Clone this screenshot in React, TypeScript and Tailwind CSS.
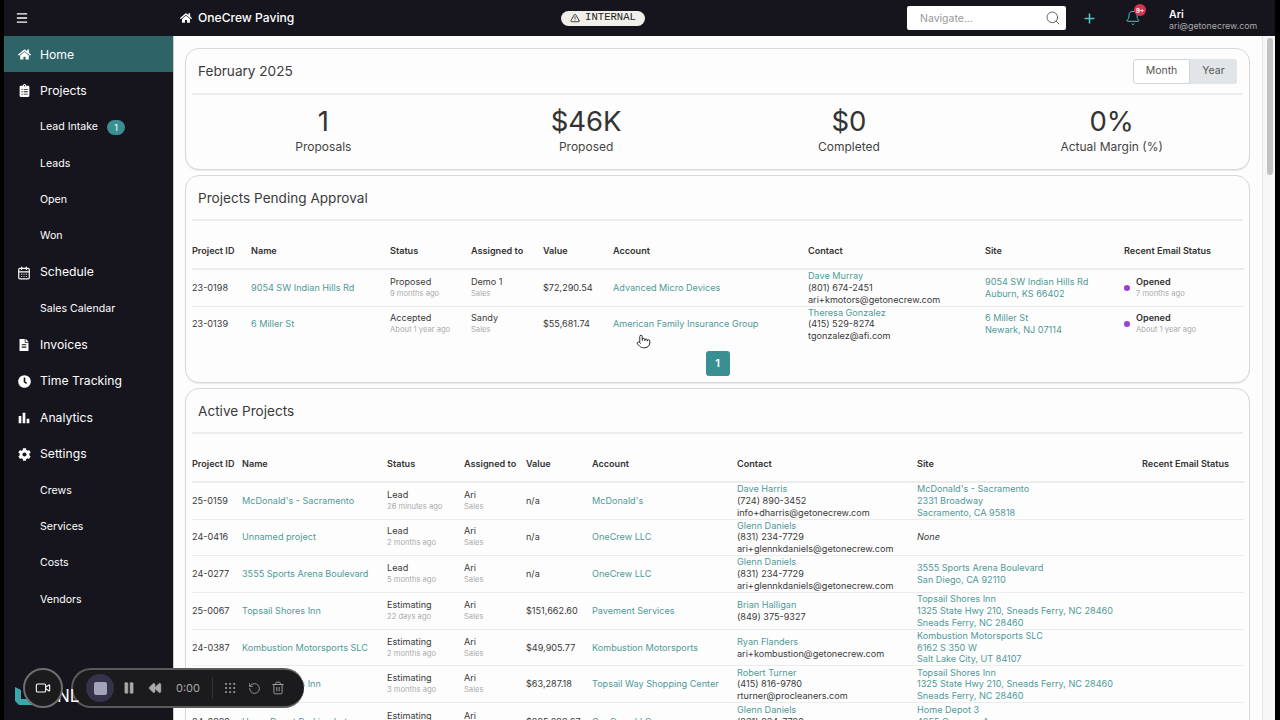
import React from "react";
import { Menu, Search, Plus, Bell, TriangleAlert, CalendarDays, Video, Pause, Rewind, Grip, RotateCcw, Trash2, Pointer } from "lucide-react";
import { FaHome, FaClipboardList, FaFileAlt, FaClock, FaCog } from "react-icons/fa";
import { MdBarChart } from "react-icons/md";

const L = ({ children }: { children: React.ReactNode }) => <div className="text-[#4f9a98]">{children}</div>;

type Nav = { t: string; icon?: React.ReactNode; badge?: string; active?: boolean };
const ic = "text-white";
const nav: Nav[] = [
  { t: "Home", icon: <FaHome size={13} className={ic} />, active: true },
  { t: "Projects", icon: <FaClipboardList size={13} className={ic} /> },
  { t: "Lead Intake", badge: "1" },
  { t: "Leads" },
  { t: "Open" },
  { t: "Won" },
  { t: "Schedule", icon: <CalendarDays size={14} strokeWidth={2} className={ic} /> },
  { t: "Sales Calendar" },
  { t: "Invoices", icon: <FaFileAlt size={12} className={ic} /> },
  { t: "Time Tracking", icon: <FaClock size={13} className={ic} /> },
  { t: "Analytics", icon: <MdBarChart size={16} className={ic} /> },
  { t: "Settings", icon: <FaCog size={13} className={ic} /> },
  { t: "Crews" },
  { t: "Services" },
  { t: "Costs" },
  { t: "Vendors" },
];

type Row = {
  id: string; name: string; status: string; ago: string; who: string; value: string; account: string;
  contact: string[]; site: string[]; none?: boolean; email?: string[];
};

const pending: Row[] = [
  { id: "23-0198", name: "9054 SW Indian Hills Rd", status: "Proposed", ago: "9 months ago", who: "Demo 1", value: "$72,290.54", account: "Advanced Micro Devices", contact: ["Dave Murray", "(801) 674-2451", "ari+kmotors@getonecrew.com"], site: ["9054 SW Indian Hills Rd", "Auburn, KS 66402"], email: ["Opened", "7 months ago"] },
  { id: "23-0139", name: "6 Miller St", status: "Accepted", ago: "About 1 year ago", who: "Sandy", value: "$55,681.74", account: "American Family Insurance Group", contact: ["Theresa Gonzalez", "(415) 529-8274", "tgonzalez@afi.com"], site: ["6 Miller St", "Newark, NJ 07114"], email: ["Opened", "About 1 year ago"] },
];

const active: Row[] = [
  { id: "25-0159", name: "McDonald's - Sacramento", status: "Lead", ago: "26 minutes ago", who: "Ari", value: "n/a", account: "McDonald's", contact: ["Dave Harris", "(724) 890-3452", "info+dharris@getonecrew.com"], site: ["McDonald's - Sacramento", "2331 Broadway", "Sacramento, CA 95818"] },
  { id: "24-0416", name: "Unnamed project", status: "Lead", ago: "2 months ago", who: "Ari", value: "n/a", account: "OneCrew LLC", contact: ["Glenn Daniels", "(831) 234-7729", "ari+glennkdaniels@getonecrew.com"], site: [], none: true },
  { id: "24-0277", name: "3555 Sports Arena Boulevard", status: "Lead", ago: "5 months ago", who: "Ari", value: "n/a", account: "OneCrew LLC", contact: ["Glenn Daniels", "(831) 234-7729", "ari+glennkdaniels@getonecrew.com"], site: ["3555 Sports Arena Boulevard", "San Diego, CA 92110"] },
  { id: "25-0067", name: "Topsail Shores Inn", status: "Estimating", ago: "22 days ago", who: "Ari", value: "$151,662.60", account: "Pavement Services", contact: ["Brian Halligan", "(849) 375-9327"], site: ["Topsail Shores Inn", "1325 State Hwy 210, Sneads Ferry, NC 28460", "Sneads Ferry, NC 28460"] },
  { id: "24-0387", name: "Kombustion Motorsports SLC", status: "Estimating", ago: "2 months ago", who: "Ari", value: "$49,905.77", account: "Kombustion Motorsports", contact: ["Ryan Flanders", "ari+kombustion@getonecrew.com"], site: ["Kombustion Motorsports SLC", "6162 S 350 W", "Salt Lake City, UT 84107"] },
  { id: "25-0068", name: "Topsail Shores Inn", status: "Estimating", ago: "3 months ago", who: "Ari", value: "$63,287.18", account: "Topsail Way Shopping Center", contact: ["Robert Turner", "(415) 816-9780", "rturner@procleaners.com"], site: ["Topsail Shores Inn", "1325 State Hwy 210, Sneads Ferry, NC 28460", "Sneads Ferry, NC 28460"] },
  { id: "24-0289", name: "Home Depot Parking Lot", status: "Estimating", ago: "4 months ago", who: "Ari", value: "$225,882.67", account: "OneCrew LLC", contact: ["Glenn Daniels", "(831) 234-7729", "ari+glennkdaniels@getonecrew.com"], site: ["Home Depot 3", "4255 Genesee Avenue", "San Diego, CA 92117"] },
];

const heads = ["Project ID", "Name", "Status", "Assigned to", "Value", "Account", "Contact", "Site", "Recent Email Status"];

function ProjectTable({ rows, widths }: { rows: Row[]; widths: number[] }) {
  return (
    <table className="w-[1052px] table-fixed border-collapse text-[9.1px] leading-[11.8px] text-[#3a3a3a]">
      <colgroup>
        {widths.map((w, i) => <col key={i} style={{ width: w }} />)}
      </colgroup>
      <thead>
        <tr className="h-[24px] border-b-2 border-[#ececec]">
          {heads.map((h) => <th key={h} className="p-0 text-left align-top text-[9.1px] font-semibold leading-[12px] whitespace-nowrap text-[#333]">{h}</th>)}
        </tr>
      </thead>
      <tbody>
        {rows.map((r, i) => (
          <tr key={r.id} className={"border-b border-[#ececec] last:border-b-0 " + (i % 3 === 1 ? "h-[36px]" : "h-[37px]")}>
            <td className="p-0">{r.id}</td>
            <td className="p-0"><L>{r.name}</L></td>
            <td className="p-0">
              <div>{r.status}</div>
              <div className="text-[7.6px] text-[#aaa]">{r.ago}</div>
            </td>
            <td className="p-0">
              <div>{r.who}</div>
              <div className="text-[7.6px] text-[#aaa]">Sales</div>
            </td>
            <td className="p-0">{r.value}</td>
            <td className="p-0"><L>{r.account}</L></td>
            <td className="p-0 whitespace-nowrap">
              <L>{r.contact[0]}</L>
              {r.contact.slice(1).map((c) => <div key={c}>{c}</div>)}
            </td>
            <td className="p-0 whitespace-nowrap">
              {r.none ? <i>None</i> : r.site.map((s) => <L key={s}>{s}</L>)}
            </td>
            <td className="p-0">
              {r.email && (
                <div className="flex items-center gap-[6px]">
                  <span className="h-[6px] w-[6px] rounded-full bg-[#9b3fd6]" />
                  <div>
                    <div className="font-semibold text-[#333]">{r.email[0]}</div>
                    <div className="text-[7.6px] text-[#aaa]">{r.email[1]}</div>
                  </div>
                </div>
              )}
            </td>
          </tr>
        ))}
      </tbody>
    </table>
  );
}

function Card({ title, right, children, className, head }: { title: string; right?: React.ReactNode; children: React.ReactNode; className?: string; head?: string }) {
  return (
    <section className={"rounded-[14px] border border-[#d8d8d8] bg-[#fdfdfd] px-[6px] shadow-[0_1px_1px_rgba(0,0,0,0.08)] " + (className ?? "")}>
      <div className={"flex items-center justify-between border-b-2 border-[#ececec] px-[6px] " + (head ?? "h-[45px] pt-px")}>
        <h2 className="text-[13.6px] font-normal text-[#3a3a3a]">{title}</h2>
        {right}
      </div>
      {children}
    </section>
  );
}

function Stat({ v, l }: { v: string; l: string }) {
  return (
    <div className="flex flex-col items-center text-[#333]">
      <div className="text-[27.5px] leading-[35px]">{v}</div>
      <div className="text-[12px] leading-[15px] text-[#444]">{l}</div>
    </div>
  );
}

export default function App() {
  return (
    <div className="relative flex h-[720px] w-[1280px] overflow-hidden bg-black pl-1 pr-[5px] font-['Inter',sans-serif]">
      <div className="flex min-w-0 flex-1 flex-col">
        <header className="flex h-9 shrink-0 items-center bg-[#16151d] text-white">
          <div className="w-[169px] shrink-0 pl-[11px]"><Menu size={14} strokeWidth={2.2} /></div>
          <div className="flex w-[388px] shrink-0 items-center gap-[6px] pl-[7px]">
            <FaHome size={12} />
            <span className="text-[12.1px] font-medium">OneCrew Paving</span>
          </div>
          <div className="flex h-[15px] w-[84px] items-center justify-center gap-[5px] rounded-full bg-[#f0efe9] font-['Liberation_Mono',monospace] text-[10.6px] text-[#222]">
            <TriangleAlert size={10} />
            INTERNAL
          </div>
          <div className="ml-[262px] flex h-6 w-[159px] items-center justify-between rounded-[2px] bg-white pl-[13px] pr-[5px] text-[#999]">
            <span className="pt-px text-[10.5px]">Navigate...</span>
            <Search size={16} strokeWidth={1.4} className="text-[#555]" />
          </div>
          <Plus size={15} strokeWidth={2.5} className="ml-4 text-[#4cc5c0]" />
          <div className="relative ml-[28px]">
            <Bell size={16} strokeWidth={1.5} className="text-[#4cc5c0]" />
            <span className="absolute -right-[5px] -top-[6px] flex h-[12px] w-[12px] items-center justify-center rounded-full bg-[#d7344f] text-[6px] font-bold text-white">9+</span>
          </div>
          <div className="ml-[28px] pt-[3px] leading-none">
            <div className="text-[10.5px] font-semibold leading-[12px]">Ari</div>
            <div className="text-[8.8px] leading-[10px] text-[#aaa]">ari@getonecrew.com</div>
          </div>
        </header>
        <div className="flex min-h-0 flex-1">
          <aside className="relative flex w-[169px] shrink-0 flex-col bg-[#16151d] text-white">
            {nav.map((n) => (
              <div key={n.t} className={"flex h-[36.33px] shrink-0 items-center pt-px " + (n.active ? "bg-[#2e6468]" : "")}>
                <div className="flex w-9 shrink-0 justify-center pl-1">{n.icon}</div>
                <span className={n.icon ? "text-[12.2px]" : "text-[10.6px]"}>{n.t}</span>
                {n.badge && (
                  <span className="ml-[9px] flex h-[15px] w-[18px] items-center justify-center rounded-full bg-[#3a8f92] text-[9px]">{n.badge}</span>
                )}
              </div>
            ))}
            <svg width="22" height="20" viewBox="0 0 22 20" className="absolute bottom-[14px] left-[10px]"><path d="M1 1l6 3v9l9 0 5 2v4H5L1 15z" fill="#3aa7a8" /></svg>
          </aside>
          <main className="flex min-w-0 flex-1 flex-col gap-[5px] overflow-hidden border-l border-[#ccc] bg-[#fdfdfd] pl-[11px] pr-3 pt-3">
            <Card
              title="February 2025"
              className="h-[122px] shrink-0"
              head="h-[46px]"
              right={
                <div className="flex h-[25px] text-[10.5px] text-[#555]">
                  <span className="flex w-[57px] items-center justify-center rounded-l-[3px] border border-[#cfd6d8] bg-white">Month</span>
                  <span className="flex w-[47px] items-center justify-center rounded-r-[3px] bg-[#e2e5e7]">Year</span>
                </div>
              }
            >
              <div className="grid grid-cols-4 pt-[9px]">
                <Stat v="1" l="Proposals" />
                <Stat v="$46K" l="Proposed" />
                <Stat v="$0" l="Completed" />
                <Stat v="0%" l="Actual Margin (%)" />
              </div>
            </Card>
            <Card title="Projects Pending Approval" className="h-[208px] shrink-0">
              <div className="pt-6">
                <ProjectTable rows={pending} widths={[59, 139, 81, 72, 70, 195, 177, 139, 120]} />
                <div className="mt-[9px] flex justify-center">
                  <span className="flex h-[25px] w-[24px] items-center justify-center rounded-[3px] bg-[#3a8f92] text-[11px] font-semibold text-white">1</span>
                </div>
              </div>
            </Card>
            <Card title="Active Projects" className="flex-1">
              <div className="pt-6">
                <ProjectTable rows={active} widths={[50, 145, 77, 62, 66, 145, 180, 225, 102]} />
              </div>
            </Card>
          </main>
          <div className="w-[13px] shrink-0 border-l border-[#e4e4e4] bg-[#f7f7f7] pl-[4px] pt-[2px]">
            <div className="h-[137px] w-[6px] rounded-full bg-[#c2c2c2]" />
          </div>
        </div>
      </div>

      <Pointer size={15} strokeWidth={1.5} className="absolute left-[636px] top-[334px] fill-white text-[#222]" />

      <div className="absolute left-[71px] top-[668px] flex h-[40px] w-[233px] items-center rounded-full border-2 border-[#5a5a5a] border-r-0 bg-[#1b1b1d] pl-[13px] text-[#aaa]">
        <span className="flex h-[28px] w-[28px] items-center justify-center rounded-full bg-[#34334a]">
          <span className="h-[13px] w-[13px] rounded-[2px] bg-[#a3a2b8]" />
        </span>
        <Pause size={14} fill="currentColor" strokeWidth={1} className="ml-[8px]" />
        <Rewind size={14} fill="currentColor" strokeWidth={1} className="ml-[12px]" />
        <span className="ml-[14px] text-[11px]">0:00</span>
        <span className="ml-3 h-[22px] w-px bg-[#333]" />
        <Grip size={14} strokeWidth={1.5} className="ml-[10px]" />
        <RotateCcw size={13} strokeWidth={1.5} className="ml-[11px]" />
        <Trash2 size={14} strokeWidth={1.5} className="ml-[10px]" />
      </div>
      <span className="absolute left-[57px] top-[685px] text-[17px] leading-[22px] text-white">NL</span>
      <div className="absolute left-[23px] top-[668px] flex h-[40px] w-[40px] items-center justify-center rounded-full border-2 border-[#6e6e6e] bg-[#1b1b1d] text-white">
        <Video size={16} strokeWidth={1.6} />
      </div>
    </div>
  );
}
